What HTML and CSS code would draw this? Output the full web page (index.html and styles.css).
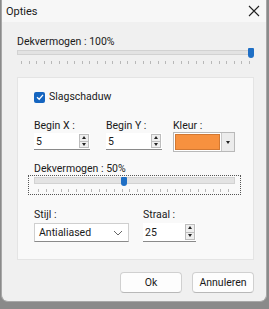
FILE: index.html
```html
<!DOCTYPE html>
<html lang="nl">
<head>
    <meta charset="UTF-8">
    <meta name="viewport" content="width=device-width, initial-scale=1.0">
    <title>Opties</title>
    <link rel="stylesheet" href="styles.css">
</head>
<body>
    <div class="dialog">
        <div class="dialog-title">
            <span>Opties</span>
            <svg class="close-icon" width="12" height="12" viewBox="0 0 12 12">
                <path d="M1 1 L11 11 M11 1 L1 11" stroke="#222" stroke-width="1.1" fill="none"/>
            </svg>
        </div>

        <div class="dialog-body">
            <div class="field-label">Dekvermogen : 100%</div>
            <div class="slider slider-top">
                <div class="slider-track"></div>
                <div class="slider-thumb thumb-end"></div>
                <div class="slider-ticks"></div>
            </div>

            <div class="group">
                <label class="check-row">
                    <span class="check-box">
                        <svg width="8" height="8" viewBox="0 0 8 8"><path d="M1 4.2 L3.2 6.2 L7 1.8" stroke="#fff" stroke-width="1.3" fill="none"/></svg>
                    </span>
                    Slagschaduw
                </label>

                <div class="row-three">
                    <div class="col col-x">
                        <div class="field-label">Begin X :</div>
                        <div class="spin">
                            <span class="spin-value">5</span>
                            <span class="spin-btns"><i class="up"></i><i class="down"></i></span>
                        </div>
                    </div>
                    <div class="col col-y">
                        <div class="field-label">Begin Y :</div>
                        <div class="spin">
                            <span class="spin-value">5</span>
                            <span class="spin-btns"><i class="up"></i><i class="down"></i></span>
                        </div>
                    </div>
                    <div class="col col-color">
                        <div class="field-label">Kleur :</div>
                        <div class="color-pick">
                            <span class="color-swatch"></span>
                            <span class="color-drop"><i class="down"></i></span>
                        </div>
                    </div>
                </div>

                <div class="field-label label-50">Dekvermogen : 50%</div>
                <div class="slider slider-inner">
                    <div class="slider-track"></div>
                    <div class="slider-thumb thumb-mid"></div>
                    <div class="slider-ticks"></div>
                </div>

                <div class="row-two">
                    <div class="col col-style">
                        <div class="field-label">Stijl :</div>
                        <div class="combo">
                            <span>Antialiased</span>
                            <svg width="10" height="6" viewBox="0 0 10 6"><path d="M1 1 L5 5 L9 1" stroke="#666" stroke-width="1" fill="none"/></svg>
                        </div>
                    </div>
                    <div class="col col-radius">
                        <div class="field-label">Straal :</div>
                        <div class="spin">
                            <span class="spin-value">25</span>
                            <span class="spin-btns"><i class="up"></i><i class="down"></i></span>
                        </div>
                    </div>
                </div>
            </div>

            <div class="buttons">
                <button class="btn">Ok</button>
                <button class="btn">Annuleren</button>
            </div>
        </div>
    </div>
</body>
</html>
```

FILE: styles.css
```css
html,
body {
    margin: 0px;
    padding: 0px;
    background-color: #8a8a8a;
}

body {
    width: 269px;
    height: 309px;
    font-family: Roboto, "Noto Sans", sans-serif;
    font-size: 10.5px;
    color: #1a1a1a;
}

.dialog {
    width: 264px;
    height: 301px;
    margin-left: 1px;
    background-color: #f0f0f0;
    border: #a8a8a8 solid 1px;
    border-top: none;
    border-radius: 0px 0px 7px 7px;
    overflow: hidden;
    display: flex;
    flex-direction: column;
}

.dialog-title {
    height: 22px;
    background-color: #f7f7f7;
    display: flex;
    align-items: center;
    justify-content: space-between;
    padding: 0px 6px 0px 4px;
    font-size: 11px;
}

.dialog-body {
    padding: 13px 12px 0px 15px;
    display: flex;
    flex-direction: column;
}

.field-label {
    height: 14px;
    line-height: 14px;
}

/* sliders */
.slider {
    position: relative;
}

.slider-top {
    height: 15px;
}

.slider-track {
    height: 5px;
    margin-top: 1px;
    background-color: #e3e3e3;
    border: #d2d2d2 solid 1px;
    box-sizing: border-box;
}

.slider-ticks {
    height: 3px;
    margin: 6px 4px 0px 4px;
    background-image: repeating-linear-gradient(90deg, #b8b8b8 0px, #b8b8b8 1px, transparent 1px, transparent 7.6px);
}

.slider-thumb {
    position: absolute;
    top: -1px;
    width: 6px;
    height: 10px;
    background-color: #1f6fc5;
    border-radius: 1px 1px 3px 3px;
}

.thumb-end {
    right: 0px;
}

.thumb-mid {
    left: 92px;
    top: 1px;
    height: 9px;
}

.group {
    margin-top: 13px;
    height: 183px;
    background-color: #f9f9f9;
    border: #e4e4e4 solid 1px;
    padding: 12px 0px 0px 16px;
    box-sizing: border-box;
}

.check-row {
    display: flex;
    align-items: center;
    gap: 4px;
    height: 14px;
    line-height: 14px;
}

.check-box {
    width: 11px;
    height: 11px;
    background-color: #1565c0;
    border-radius: 2px;
    display: flex;
    align-items: center;
    justify-content: center;
}

.row-three {
    display: flex;
    margin-top: 15px;
}

.col-x {
    width: 72px;
}

.col-y {
    width: 67px;
}

.spin {
    height: 17px;
    background-color: #ffffff;
    border-bottom: #8a8a8a solid 1px;
    box-sizing: border-box;
    display: flex;
    align-items: center;
    justify-content: space-between;
    padding-left: 2px;
}

.col-x .spin,
.col-y .spin {
    width: 56px;
}

.spin-btns {
    width: 10px;
    height: 14px;
    display: flex;
    flex-direction: column;
    margin-right: 1px;
    border: #bdbdbd solid 1px;
    box-sizing: border-box;
}

.spin-btns i {
    flex: 1;
    background-color: #efefef;
    position: relative;
}

.spin-btns i.up {
    border-bottom: #bdbdbd solid 1px;
}

.spin-btns i::after,
.color-drop i::after {
    content: "";
    position: absolute;
    left: 2px;
    top: 2px;
    border-left: 2px solid transparent;
    border-right: 2px solid transparent;
}

.spin-btns i.up::after {
    border-bottom: 3px solid #222;
    top: 1px;
}

.spin-btns i.down::after {
    border-top: 3px solid #222;
    top: 1px;
}

.color-pick {
    width: 62px;
    height: 20px;
    margin-top: -1px;
    display: flex;
    border: #b9b9b9 solid 1px;
    box-sizing: border-box;
    background-color: #ffffff;
}

.color-swatch {
    flex: 1;
    margin: 1px;
    background-color: #f7913f;
    border: #d27832 solid 1px;
}

.color-drop {
    width: 12px;
    background-color: #ececec;
    position: relative;
    border-left: #c8c8c8 solid 1px;
}

.color-drop i::after {
    left: 4px;
    top: 8px;
    border-top: 3px solid #222;
}

.label-50 {
    margin-top: 10px;
    height: 13px;
    line-height: 13px;
}

.slider-inner {
    width: 213px;
    height: 20px;
    margin-left: -6px;
    padding: 0px 5px;
    border: #555 dotted 1px;
    box-sizing: border-box;
}

.slider-inner .slider-track {
    height: 7px;
    margin-top: 1px;
}

.slider-inner .slider-ticks {
    margin-top: 5px;
}

.row-two {
    display: flex;
    margin-top: 13px;
}

.col-style {
    width: 109px;
}

.col-style .field-label,
.col-radius .field-label {
    margin-bottom: 1px;
}

.combo {
    width: 95px;
    height: 19px;
    background-color: #ffffff;
    border: #cfcfcf solid 1px;
    border-bottom-color: #8a8a8a;
    box-sizing: border-box;
    display: flex;
    align-items: center;
    justify-content: space-between;
    padding: 0px 5px 0px 4px;
}

.col-radius .spin {
    width: 53px;
    height: 19px;
}

.col-radius .spin-btns {
    height: 16px;
}

.buttons {
    display: flex;
    justify-content: flex-end;
    gap: 10px;
    margin-top: 12px;
}

.btn {
    width: 62px;
    height: 21px;
    font-family: Roboto, "Noto Sans", sans-serif;
    font-size: 10.5px;
    color: #1a1a1a;
    background-color: #fdfdfd;
    border: #d0d0d0 solid 1px;
    border-bottom-color: #b8b8b8;
    border-radius: 4px;
    padding: 0px;
}
```
